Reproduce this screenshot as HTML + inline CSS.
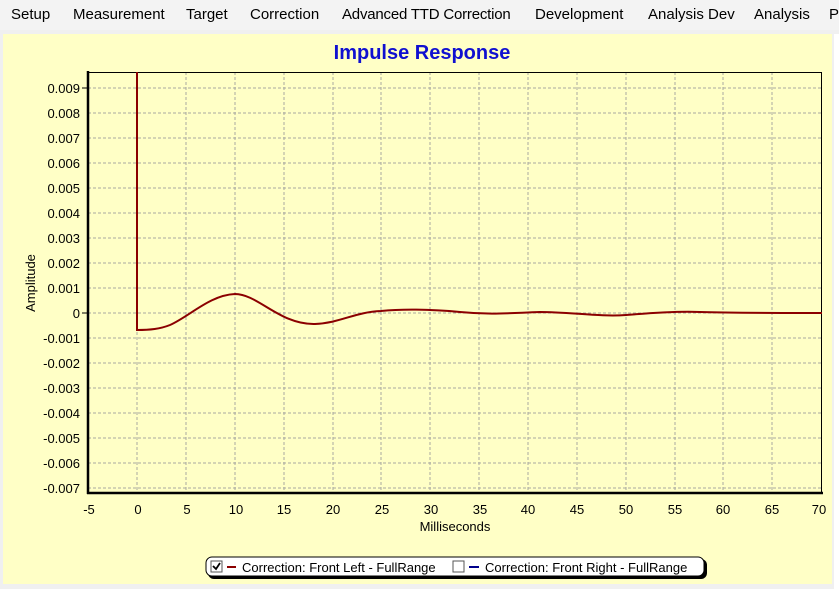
<!DOCTYPE html>
<html><head><meta charset="utf-8"><style>
body{margin:0;width:839px;height:589px;overflow:hidden;background:#f0f0f0;font-family:"Liberation Sans",sans-serif;position:relative}
.menu{position:absolute;top:0;left:0;width:839px;height:30px;background:#f3f3f3;font-size:15px;color:#000}
.menu span{position:absolute;top:6px;white-space:nowrap}
.panel{position:absolute;left:3px;top:34px;width:829px;height:550px;background:#ffffc6}
.rstrip{position:absolute;left:834px;top:34px;width:5px;height:555px;background:#fff}
</style></head><body>
<div class="menu">
<span style="left:11px">Setup</span><span style="left:73px">Measurement</span><span style="left:186px">Target</span><span style="left:250px">Correction</span><span style="left:342px;letter-spacing:-0.2px">Advanced TTD Correction</span><span style="left:535px">Development</span><span style="left:648px">Analysis Dev</span><span style="left:754px">Analysis</span><span style="left:829px">P</span>
</div>
<div class="panel"></div>
<div class="rstrip"></div>
<svg style="position:absolute;left:0;top:0" width="839" height="589" font-family="Liberation Sans, sans-serif">
<text x="422" y="59" text-anchor="middle" font-size="20" font-weight="bold" fill="#1010d0">Impulse Response</text>
<g stroke="#a8a8a0" stroke-width="1" stroke-dasharray="3,2">
<line x1="137" y1="72" x2="137" y2="493"/><line x1="186" y1="72" x2="186" y2="493"/><line x1="235" y1="72" x2="235" y2="493"/><line x1="284" y1="72" x2="284" y2="493"/><line x1="333" y1="72" x2="333" y2="493"/><line x1="381" y1="72" x2="381" y2="493"/><line x1="430" y1="72" x2="430" y2="493"/><line x1="479" y1="72" x2="479" y2="493"/><line x1="528" y1="72" x2="528" y2="493"/><line x1="577" y1="72" x2="577" y2="493"/><line x1="626" y1="72" x2="626" y2="493"/><line x1="675" y1="72" x2="675" y2="493"/><line x1="723" y1="72" x2="723" y2="493"/><line x1="772" y1="72" x2="772" y2="493"/>
<line x1="88" y1="88" x2="822" y2="88"/><line x1="88" y1="113" x2="822" y2="113"/><line x1="88" y1="138" x2="822" y2="138"/><line x1="88" y1="163" x2="822" y2="163"/><line x1="88" y1="188" x2="822" y2="188"/><line x1="88" y1="213" x2="822" y2="213"/><line x1="88" y1="238" x2="822" y2="238"/><line x1="88" y1="263" x2="822" y2="263"/><line x1="88" y1="288" x2="822" y2="288"/><line x1="88" y1="313" x2="822" y2="313"/><line x1="88" y1="338" x2="822" y2="338"/><line x1="88" y1="363" x2="822" y2="363"/><line x1="88" y1="388" x2="822" y2="388"/><line x1="88" y1="413" x2="822" y2="413"/><line x1="88" y1="438" x2="822" y2="438"/><line x1="88" y1="463" x2="822" y2="463"/><line x1="88" y1="488" x2="822" y2="488"/>
</g>
<rect x="88.5" y="72.5" width="733" height="420" fill="none" stroke="#000" stroke-width="1"/>
<line x1="88" y1="71" x2="88" y2="494" stroke="#000" stroke-width="2.5"/>
<line x1="87" y1="493" x2="823" y2="493" stroke="#000" stroke-width="2.5"/>
<path d="M137,72 L137,330 C150,330 160,329 170,325 C190,316 210,295 235,294 C258,294 280,325 315,324 C340,323 355,312 381,311 C400,309 430,309 460,312 C490,315 510,313 540,312 C570,312 600,317 626,315 C650,313 680,311 700,312 C730,313 760,313 822,313" fill="none" stroke="#8b0000" stroke-width="2"/>
<g font-size="13" text-anchor="end" fill="#000">
<text x="80" y="93">0.009</text><text x="80" y="118">0.008</text><text x="80" y="143">0.007</text><text x="80" y="168">0.006</text><text x="80" y="193">0.005</text><text x="80" y="218">0.004</text><text x="80" y="243">0.003</text><text x="80" y="268">0.002</text><text x="80" y="293">0.001</text><text x="80" y="318">0</text><text x="80" y="343">-0.001</text><text x="80" y="368">-0.002</text><text x="80" y="393">-0.003</text><text x="80" y="418">-0.004</text><text x="80" y="443">-0.005</text><text x="80" y="468">-0.006</text><text x="80" y="493">-0.007</text>
</g>
<g stroke="#000"><line x1="82" y1="88" x2="88" y2="88"/><line x1="82" y1="313" x2="88" y2="313"/></g>
<g font-size="13" text-anchor="middle" fill="#000">
<text x="89" y="514">-5</text><text x="138" y="514">0</text><text x="187" y="514">5</text><text x="236" y="514">10</text><text x="284" y="514">15</text><text x="333" y="514">20</text><text x="382" y="514">25</text><text x="431" y="514">30</text><text x="480" y="514">35</text><text x="528" y="514">40</text><text x="577" y="514">45</text><text x="626" y="514">50</text><text x="675" y="514">55</text><text x="723" y="514">60</text><text x="772" y="514">65</text><text x="819" y="514">70</text>
<text x="455" y="531">Milliseconds</text>
</g>
<text transform="translate(35,283) rotate(-90)" font-size="13" text-anchor="middle">Amplitude</text>
<rect x="208" y="559" width="499" height="20" rx="6" fill="#000"/>
<rect x="206" y="557" width="498" height="19" rx="6" fill="#fff" stroke="#000"/>
<rect x="211" y="561" width="11" height="11" fill="#fff" stroke="#555"/>
<path d="M213,566 L216,569 L220,563" stroke="#000" stroke-width="1.8" fill="none"/>
<line x1="227" y1="567" x2="236" y2="567" stroke="#8b0000" stroke-width="2"/>
<text x="242" y="572" font-size="13">Correction: Front Left - FullRange</text>
<rect x="453" y="561" width="11" height="11" fill="#fff" stroke="#555"/>
<line x1="469" y1="567" x2="479" y2="567" stroke="#00008b" stroke-width="2"/>
<text x="485" y="572" font-size="13">Correction: Front Right - FullRange</text>
</svg>
</body></html>
